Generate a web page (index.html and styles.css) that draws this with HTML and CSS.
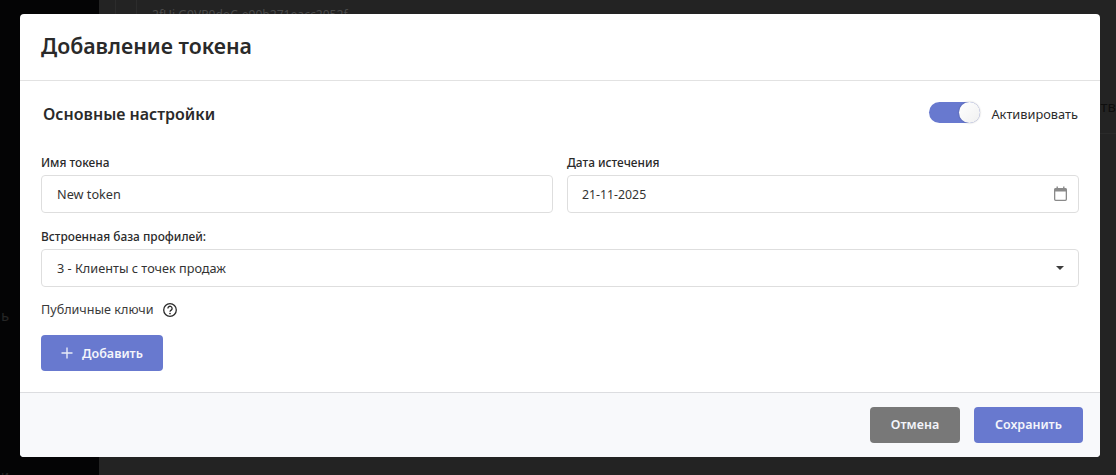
FILE: index.html
```html
<!DOCTYPE html>
<html lang="ru">
<head>
<meta charset="utf-8">
<title>Добавление токена</title>
<link rel="stylesheet" href="styles.css">
</head>
<body>
<div class="backdrop">
  <aside class="side">
    <span class="side-text side-text-a">ь</span>
    <span class="side-text side-text-b">и</span>
  </aside>
  <main class="content">
    <div class="content-row">
      <span class="cell cell-a"></span>
      <span class="cell cell-b"></span>
      <span class="content-hash">2fUi G9VP0doC-e90b271eacc2052f</span>
    </div>
    <div class="content-edge">тв</div>
    <div class="content-line"></div>
  </main>
</div>
<section class="modal">
  <header class="modal-head"><h1>Добавление токена</h1></header>
  <div class="modal-body">
    <div class="section-row">
      <h2>Основные настройки</h2>
      <div class="switch-wrap">
        <span class="switch"><span class="knob"></span></span>
        <span class="switch-label">Активировать</span>
      </div>
    </div>
    <div class="two-col">
      <div class="field">
        <label>Имя токена</label>
        <div class="input">New token</div>
      </div>
      <div class="field">
        <label>Дата истечения</label>
        <div class="input">
          <span class="date-value">21-11-2025</span>
          <svg class="cal" width="13" height="15" viewBox="0 0 13 15" fill="none"><rect x=".65" y="2.65" width="11.7" height="11.7" rx="1" stroke="#8a8a8a" stroke-width="1.3"/><path d="M.6 2.6h11.8v3H.6z" fill="#8a8a8a"/><path d="M3.2 .4v2.4M9.8 .4v2.4" stroke="#8a8a8a" stroke-width="1.4"/></svg>
        </div>
      </div>
    </div>
    <div class="field field-full">
      <label>Встроенная база профилей:</label>
      <div class="input">
        <span>3 - Клиенты с точек продаж</span>
        <span class="caret"></span>
      </div>
    </div>
    <div class="keys">
      <span>Публичные ключи</span>
      <svg width="16" height="16" viewBox="0 0 16 16" fill="none"><circle cx="8" cy="8" r="6.3" stroke="#2b2b2b" stroke-width="1.3"/><path d="M5.9 6.4a2.1 2.1 0 1 1 3.3 1.7c-.7.5-1.2.9-1.2 1.7" stroke="#2b2b2b" stroke-width="1.3"/><circle cx="8" cy="11.5" r=".85" fill="#2b2b2b"/></svg>
    </div>
    <button class="btn btn-primary btn-add" type="button">
      <svg width="12" height="12" viewBox="0 0 12 12"><path d="M6 .5v11M.5 6h11" stroke="#e8ebf8" stroke-width="1.4"/></svg>
      <span>Добавить</span>
    </button>
  </div>
  <footer class="modal-foot">
    <button class="btn btn-muted" type="button">Отмена</button>
    <button class="btn btn-primary btn-save" type="button">Сохранить</button>
  </footer>
</section>
</body>
</html>
```
FILE: styles.css
```css
* { box-sizing: border-box; }
html, body { margin: 0; height: 100%; }
body {
  width: 1116px;
  height: 475px;
  overflow: hidden;
  position: relative;
  font-family: "Noto Sans", "Open Sans", sans-serif;
  color: #2b2b2b;
  background: #222;
}
.backdrop { display: flex; height: 475px; }
.side { width: 99px; background: #040405; position: relative; color: #262626; font-size: 15px; }
.side-text { position: absolute; left: 1px; }
.side-text-a { top: 305px; }
.side-text-b { top: 468px; line-height: 14px; font-size: 13px; }
.content { flex: 1; background: #232323; position: relative; color: #4a4a4a; font-size: 12.1px; }
.content-row { display: flex; height: 14px; }
.cell { display: block; height: 14px; border-right: 1px solid #2c2c2c; }
.cell-a { width: 17px; }
.cell-b { width: 21px; }
.content-hash { margin-left: 15px; padding-top: 7px; line-height: 16px; white-space: nowrap; }
.content-edge { position: absolute; right: 0; top: 96px; color: #0e0e0e; font-size: 15px; }
.content-line { position: absolute; left: 1001px; right: 0; top: 133px; height: 1px; background: #2a2a2a; }

.modal {
  position: absolute;
  left: 20px;
  top: 14px;
  width: 1080px;
  height: 443px;
  background: #fff;
  border-radius: 4px;
  display: flex;
  flex-direction: column;
  overflow: hidden;
}
.modal-head {
  height: 67px;
  flex: none;
  border-bottom: 1px solid #e2e2e2;
  padding: 16px 21px 0;
}
h1 { margin: 0; font-size: 21.3px; line-height: 31px; font-weight: 600; color: #2a2a2a; }
.modal-body { flex: 1; padding: 0 21px; }
.section-row {
  display: flex;
  justify-content: space-between;
  align-items: center;
  height: 24px;
  margin-top: 21px;
  padding: 0 1px 0 2px;
}
h2 { margin: 0; font-size: 16px; line-height: 24px; font-weight: 600; color: #2a2a2a; }
.switch-wrap { display: flex; align-items: center; gap: 11px; font-size: 12.8px; }
.switch { display: block; width: 51px; height: 21px; margin-top: -3px; border-radius: 11px; background: #6879cf; }
.knob {
  display: block;
  width: 21px;
  height: 21px;
  margin-left: 30px;
  border-radius: 50%;
  background: linear-gradient(135deg, #fff, #f0f0f0);
  box-shadow: 0 0 2px rgba(0,0,0,.3);
}
.two-col { display: flex; gap: 14px; margin-top: 27px; width: 1038px; }
.two-col .field { flex: 1; }
label { display: block; font-size: 11.9px; line-height: 18px; font-weight: 500; color: #2a2a2a; margin-bottom: 4px; }
.input {
  height: 38px;
  border: 1px solid #dedede;
  border-radius: 4px;
  display: flex;
  align-items: center;
  justify-content: space-between;
  padding: 0 14px 0 15px;
  font-size: 12.7px;
  color: #333;
  background: #fff;
}
.date-value { font-size: 12.3px; margin-left: -1px; }
.cal { margin-right: -3px; margin-top: -1px; }
.field-full { width: 1038px; margin-top: 14px; }
.caret {
  width: 0;
  height: 0;
  border-left: 4px solid transparent;
  border-right: 4px solid transparent;
  border-top: 4px solid #3d3d3d;
}
.keys {
  display: flex;
  align-items: center;
  gap: 8px;
  margin-top: 14px;
  font-size: 12.6px;
  line-height: 18px;
  color: #3a3a3a;
}
.btn {
  border: 0;
  border-radius: 4px;
  font-family: inherit;
  font-size: 12.5px;
  font-weight: 600;
  color: #f4f5fb;
  display: inline-flex;
  align-items: center;
  justify-content: center;
  height: 36px;
  padding: 0;
}
.btn-primary { background: #6879cf; }
.btn-muted { background: #787878; width: 90px; }
.btn-add { width: 122px; gap: 9px; margin-top: 16px; }
.btn-save { width: 109px; }
.modal-foot {
  height: 65px;
  flex: none;
  display: flex;
  justify-content: flex-end;
  align-items: center;
  gap: 14px;
  padding: 0 17px 1px 0;
  border-top: 1px solid #dcdde0;
  background: #f8f9fb;
}
```
